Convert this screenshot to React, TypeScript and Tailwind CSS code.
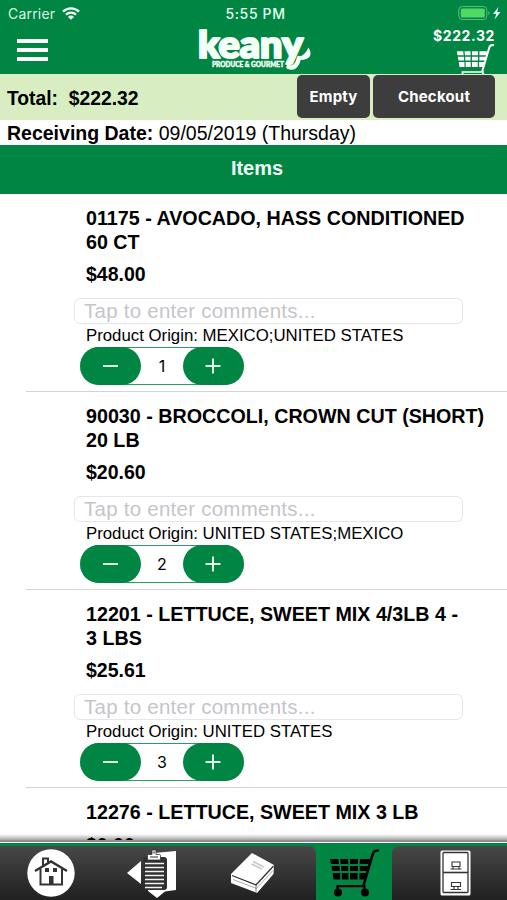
import { useState } from "react";

type Item = {
  sku: string;
  title: string;
  price: string;
  origin: string;
  qty: number;
};

const ITEMS: Item[] = [
  { sku: "01175", title: "AVOCADO, HASS CONDITIONED 60 CT", price: "$48.00", origin: "MEXICO;UNITED STATES", qty: 1 },
  { sku: "90030", title: "BROCCOLI, CROWN CUT (SHORT) 20 LB", price: "$20.60", origin: "UNITED STATES;MEXICO", qty: 2 },
  { sku: "12201", title: "LETTUCE, SWEET MIX 4/3LB 4 - 3\u00a0LBS", price: "$25.61", origin: "UNITED STATES", qty: 3 },
  { sku: "12276", title: "LETTUCE, SWEET MIX 3 LB", price: "$0.00", origin: "UNITED STATES", qty: 1 },
];

function CartIcon({ className }: { className?: string }) {
  return (
    <svg viewBox="0 0 52 50" className={className} fill="currentColor">
      <path d="M50 2.5 C46 2.5 45.5 4 44.5 7 L35.5 37.5" fill="none" stroke="currentColor" strokeWidth="2.6" strokeLinecap="round" />
      <path d="M2 11h8.5l.6 5H3zM12.2 11h8v5h-7.4zM22 11h8v5h-8zM31.8 11h11.5l-1.4 5h-10.1z" />
      <path d="M3.4 18h8l.4 5H4.2zM13 18h7.2v5h-6.8zM22 18h8v5h-8zM31.8 18h9.6l-1.4 5h-8.2z" />
      <path d="M4.6 25h7.6v6.5H5.6zM13.8 25h6.6v6.5h-6.6zM22 25h7.6v6.5H22zM31.4 25h8l-2 6.5h-6z" />
      <path d="M9.5 43V38.2H36.5V43" fill="none" stroke="currentColor" strokeWidth="2.2" />
      <circle cx="10" cy="44.5" r="4" />
      <circle cx="37" cy="44.5" r="4" />
    </svg>
  );
}

function Logo() {
  return (
    <svg width="116" height="42" viewBox="0 0 116 42" className="overflow-visible" fill="#f4fff8">
      <text x="1" y="28.300" textLength="105" lengthAdjust="spacingAndGlyphs" fontSize="37" stroke="#f4fff8" strokeWidth="2.200" strokeLinejoin="round" className="font-['Lato'] font-black">
        keany
      </text>
      {/* swash of the y */}
      <path d="M91.500 37 Q99 40 102 28" fill="none" stroke="#f4fff8" strokeWidth="4.500" strokeLinecap="round" />
      <path d="M102 26.500 Q107.500 26 111.500 17.500 Q116.500 25.500 110 28.800 Q106 30.500 101 30z" />
      <text x="15" y="37" textLength="72" lengthAdjust="spacingAndGlyphs" fontSize="6.600" stroke="#f4fff8" strokeWidth=".4" className="font-['Lato'] font-black">
        PRODUCE &amp; GOURMET
      </text>
    </svg>
  );
}

function StatusBar() {
  return (
    <div className="grid h-7 grid-cols-[1fr_auto_1fr] items-center px-2 pb-0.5 font-['Inter',sans-serif] text-[14px] text-[#d9f5e4]">
      <div className="flex items-center gap-[7px]">
        <span className="tracking-[0.2px]">Carrier</span>
        <svg width="18" height="13" viewBox="0 0 18 13" fill="none" stroke="#f0fff6" strokeWidth="2.3">
          <path d="M1 4.600C5.500.200 12.500.200 17 4.600" />
          <path d="M4 7.800C6.800 5 11.200 5 14 7.800" />
          <path d="M9 12.800 5.900 9.700C7.700 8.200 10.300 8.200 12.100 9.700z" fill="#f0fff6" stroke="none" />
        </svg>
      </div>
      <span className="pl-1 font-medium tracking-[0.65px] text-[#e4fff0]">5:55 PM</span>
      <div className="flex items-center justify-end">
        <svg width="45" height="16" viewBox="0 0 45 16" className="-mr-1">
          <rect x=".8" y="1.500" width="28" height="13" rx="3.500" fill="none" stroke="#62b68b" />
          <rect x="2.800" y="3.500" width="24" height="9" rx="1.500" fill="#4fd964" />
          <path d="M30.300 6c1.600.500 1.600 3.500 0 4z" fill="#62b68b" />
          <path d="M40.500 2 35 9h3.300l-1.800 5.500 6-7.500h-3.400z" fill="#f0fff6" />
        </svg>
      </div>
    </div>
  );
}

function Header() {
  return (
    <header className="h-[74px] shrink-0 overflow-hidden bg-[#008542]">
      <StatusBar />
      <div className="flex h-[46px] items-start">
        <div className="flex w-[197px] flex-col gap-[5px] pt-[11px] pl-[17px]">
          <span className="h-1 w-[31px] bg-white" />
          <span className="h-1 w-[31px] bg-white" />
          <span className="h-1 w-[31px] bg-white" />
        </div>
        <div className="w-[116px] pt-0.5">
          <Logo />
        </div>
        <div className="flex flex-1 flex-col items-end pr-3 text-white">
          <span className="font-['Inter',sans-serif] text-[14px] leading-[15px] font-bold tracking-[0.6px]">$222.32</span>
          <CartIcon className="h-[38px] w-10" />
        </div>
      </div>
    </header>
  );
}

function ItemRow({ item }: { item: Item }) {
  const [qty, setQty] = useState(item.qty);

  return (
    <div className="ml-[26px] h-[198px] shrink-0 border-b border-[#d4d4d6] pt-[13px]">
      <div className="pl-[60px]">
        <h3 className="w-[404px] text-[19.7px] leading-[23.5px] font-bold">
          {item.sku} - {item.title}
        </h3>
        <p className="mt-2 text-[19.5px] leading-6 font-bold">{item.price}</p>
      </div>
      <input
        placeholder="Tap to enter comments..."
        className="mt-3 ml-12 block h-[26px] w-[389px] rounded-[6px] border border-[#e6e6e8] bg-white px-[9px] text-[20.5px] tracking-[0.25px] outline-none placeholder:text-[#c5c5ca]"
      />
      <p className="pl-[60px] text-[16.8px] leading-[23px]">Product Origin: {item.origin}</p>
      <div className="ml-[54px] flex h-[38px] w-[164px] items-stretch justify-between rounded-full border-y border-[#2f9b64] bg-white">
        <button onClick={() => setQty(Math.max(0, qty - 1))} className="-my-px flex w-[61px] items-center justify-center rounded-[19px] bg-[#008542]">
          <span className="h-0.5 w-[15px] bg-[#dff5e8]" />
        </button>
        <span className="flex items-center font-['Inter',sans-serif] text-[16px]">{qty}</span>
        <button onClick={() => setQty(qty + 1)} className="-my-px flex w-[61px] items-center justify-center rounded-[19px] bg-[#008542]">
          <svg width="16" height="16" viewBox="0 0 16 16" stroke="#dff5e8" strokeWidth="2">
            <path d="M.5 8h15M8 .5v15" />
          </svg>
        </button>
      </div>
    </div>
  );
}

function HomeIcon() {
  return (
    <svg width="48" height="48" viewBox="0 0 48 48">
      <circle cx="24" cy="24" r="23.700" fill="white" />
      <g fill="none" stroke="#333" strokeWidth="2">
        <path d="M8 22 24 12.500 40 22" strokeWidth="2.400" />
        <path d="M13.500 20v15.500h21.500V20" />
        <path d="M16 16.500V9.500h5v4" />
      </g>
      <path d="M18 19h4v4h-4zM26 19h4v4h-4zM22 27h4.500v8.500H22z" fill="#333" />
    </svg>
  );
}

function OrdersIcon() {
  return (
    <svg width="50" height="50" viewBox="0 0 50 50">
      <path d="M0 24 14 12v23z" fill="white" />
      <path d="M27 4 49 2v39l-11 1.500L30 49l-9-7z" fill="white" />
      <path d="M16.500 8H37q3 0 3 3v27q0 3-3 3H16.500z" fill="#303030" />
      <path d="M18 14.500h19M18 18.500h19M18 22.500h19M18 26.500h19M18 30.500h19M18 34.500h19M18 38.500h17" stroke="#f2f2f2" strokeWidth="1.600" />
      <path d="M20.500 11V6.500q0-1 1-1H25V1h4v4.500h3.500q1 0 1 1V11z" fill="white" stroke="#333" strokeWidth=".8" />
      <path d="M23 8h8M27 2.500v2" stroke="#333" strokeWidth="1.200" />
    </svg>
  );
}

function BookIcon() {
  return (
    <svg width="44" height="42" viewBox="0 0 44 42" strokeLinejoin="round">
      <path d="M0 21 21 0l22 12-.5 9L26 40 0 30z" fill="white" />
      <path d="M1 22.500 25 32 42.500 13" fill="none" stroke="#333" strokeWidth="1.300" />
      <path d="M2 26.500 25.500 35.500 42 17.500" fill="none" stroke="#888" strokeWidth=".7" />
      <path d="M22 8.500 33 14M20.500 11l10.500 5" stroke="#c9c9c9" strokeWidth="1.800" />
      <path d="M25 32v7.500" stroke="#555" strokeWidth=".8" />
    </svg>
  );
}

function CabinetIcon() {
  return (
    <svg width="31" height="46" viewBox="0 0 31 46">
      <rect x=".5" y=".5" width="30" height="45" rx="1.500" fill="white" />
      <rect x="3" y="2.500" width="25" height="40" rx="1" fill="none" stroke="#333" strokeWidth="1.300" />
      <path d="M3 22.500h25" stroke="#333" strokeWidth="1.600" />
      <g fill="none" stroke="#333" strokeWidth="1.100">
        <path d="M12 12h8v4.500h-8zM10.500 19h11M13 16.500v2.500M19 16.500v2.500" />
        <path d="M11.500 32.500h9v4h-9zM10.500 39.500h10.500M14 36.500v3M18 36.500v3" />
      </g>
    </svg>
  );
}

function TabBar() {
  return (
    <nav className="relative h-[58px] shrink-0 border-t border-white bg-[#008542] pt-[3px]">
      {/* shadow cast on the list above */}
      <div className="absolute inset-x-0 -top-[9px] h-[6px] bg-linear-to-b from-black/0 to-black/35" />
      <div className="absolute inset-x-0 -top-[3px] h-0.5 bg-[#8f8f8f]" />
      <div className="flex h-[54px]">
        <div className="flex w-[316px] items-start rounded-tr-[7px] bg-linear-to-b from-[#484848] to-[#202020] pt-[3px]">
          <div className="w-[127px] pl-[27px]">
            <HomeIcon />
          </div>
          <div className="w-[103px]">
            <OrdersIcon />
          </div>
          <div className="pt-1 pl-px">
            <BookIcon />
          </div>
        </div>
        <div className="w-[76px] pt-0.5 pl-3 text-black">
          <CartIcon className="h-[50px] w-[52px]" />
        </div>
        <div className="flex-1 rounded-tl-[7px] bg-linear-to-b from-[#484848] to-[#202020] pt-1 pl-12">
          <CabinetIcon />
        </div>
      </div>
    </nav>
  );
}

export default function App() {
  return (
    <div className="flex h-[900px] w-[507px] flex-col overflow-hidden bg-white font-['Liberation_Sans',Arial,sans-serif] text-black">
      <Header />

      {/* Totals */}
      <div className="flex h-[46px] shrink-0 items-start justify-between bg-[#d8eec2] pr-3 pl-[7px]">
        <p className="pt-[13px] text-[19.3px] leading-6 font-bold whitespace-pre">Total:  $222.32</p>
        <div className="flex gap-[3px] pt-px font-['Inter',sans-serif] text-[15px] font-bold tracking-[0.2px] text-white">
          <button className="h-[43px] w-[73px] rounded-[5px] bg-[#3d3d3d] pt-0.5">Empty</button>
          <button className="h-[43px] w-[122px] rounded-[5px] bg-[#3d3d3d] pt-0.5">Checkout</button>
        </div>
      </div>
      <p className="h-[25px] shrink-0 pt-px pl-[7px] text-[19.5px] leading-[25px]">
        <b>Receiving Date:</b> 09/05/2019 (Thursday)
      </p>
      <h2 className="h-[49px] shrink-0 bg-[#008542] pl-[7px] text-center text-[20px] leading-[46px] font-bold text-[#effff5]">Items</h2>

      <main className="flex min-h-0 flex-1 flex-col overflow-hidden pb-[3px]">
        {ITEMS.map((item) => (
          <ItemRow key={item.sku} item={item} />
        ))}
      </main>

      <TabBar />
    </div>
  );
}
